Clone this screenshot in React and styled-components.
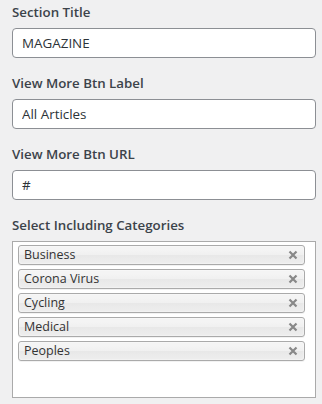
import React from "react";
import styled, { createGlobalStyle } from "styled-components";

const Global = createGlobalStyle`
  html, body { margin: 0; padding: 0; background: #f0f0f1; }
  body { font-family: "Open Sans", "Noto Sans", sans-serif; }
  * { box-sizing: border-box; }
`;

const Panel = styled.div`
  width: 322px;
  padding: 2px 6px 0 12px;
  display: flex;
  flex-direction: column;
`;

const Field = styled.div`
  display: flex;
  flex-direction: column;
  gap: 6px;
  margin-bottom: 15px;
`;

const Label = styled.label`
  font-size: 13.3px;
  line-height: 20px;
  font-weight: 600;
  color: #3c434a;
`;

const Input = styled.input`
  width: 100%;
  height: 30px;
  padding: 0 9px;
  border: 1px solid #8c8f94;
  border-radius: 4px;
  background: #fff;
  font-family: inherit;
  font-size: 13.4px;
  color: #2c3338;
  outline: none;
`;

const ChoiceBox = styled.ul`
  list-style: none;
  margin: 0;
  height: 157px;
  padding: 3px 10px 3px 5px;
  border: 1px solid #aaa;
  background: #fff;
  display: flex;
  flex-direction: column;
  gap: 4px;
`;

const Choice = styled.li`
  height: 20px;
  display: flex;
  align-items: center;
  justify-content: space-between;
  padding: 0 5px;
  border: 1px solid #aaa;
  border-radius: 3px;
  background-image: linear-gradient(#f4f4f4 20%, #f0f0f0 50%, #e8e8e8 52%, #eeeeee 100%);
  box-shadow: 0 0 2px #fff inset, 0 1px 0 rgba(0, 0, 0, 0.05);
  font-size: 12.5px;
  line-height: 18px;
  color: #333;
`;

const Remove = styled.span`
  display: flex;
  width: 10px;
  height: 10px;
  margin-right: 1px;
`;

const Cross = () => (
  <svg width="10" height="10" viewBox="0 0 10 10">
    <path d="M1.5 1.5 L8.5 8.5 M8.5 1.5 L1.5 8.5" stroke="#888" strokeWidth="2.2" strokeLinecap="butt" />
  </svg>
);

const cats = ["Business", "Corona Virus", "Cycling", "Medical", "Peoples"];

export default function App() {
  return (
    <>
      <Global />
      <Panel>
        <Field>
          <Label>Section Title</Label>
          <Input defaultValue="MAGAZINE" />
        </Field>
        <Field>
          <Label>View More Btn Label</Label>
          <Input defaultValue="All Articles" />
        </Field>
        <Field>
          <Label>View More Btn URL</Label>
          <Input defaultValue="#" />
        </Field>
        <Field>
          <Label>Select Including Categories</Label>
          <ChoiceBox>
            {cats.map((c) => (
              <Choice key={c}>
                <span>{c}</span>
                <Remove>
                  <Cross />
                </Remove>
              </Choice>
            ))}
          </ChoiceBox>
        </Field>
      </Panel>
    </>
  );
}
